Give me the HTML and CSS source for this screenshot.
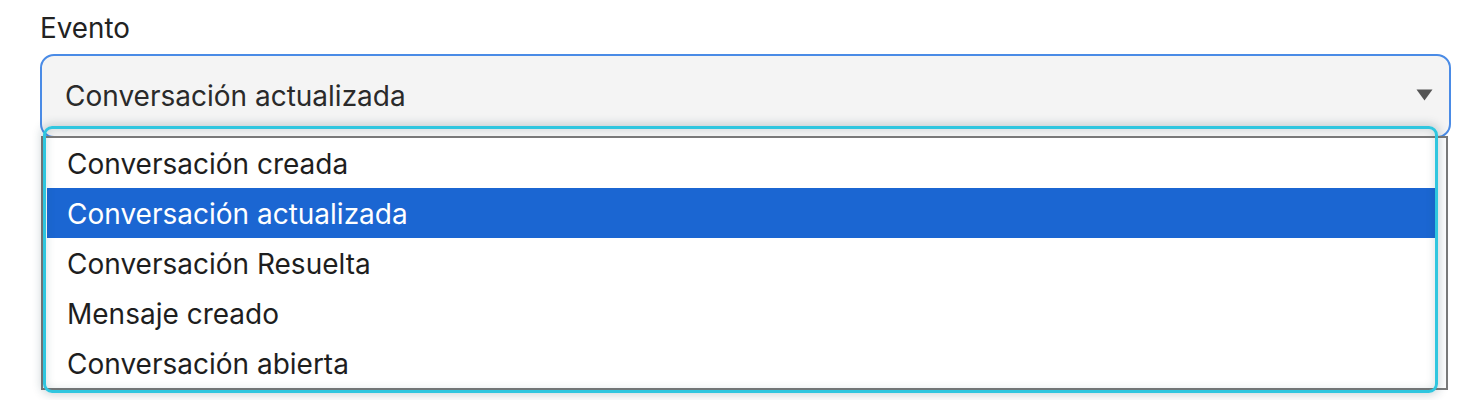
FILE: index.html
```html
<!DOCTYPE html>
<html lang="es">
<head>
<meta charset="utf-8">
<title>Evento</title>
<link rel="stylesheet" href="styles.css">
</head>
<body>
<div class="field">
  <label class="label">Evento</label>
  <div class="select-wrap">
    <div class="select">
      <span class="value">Conversación actualizada</span>
      <svg class="caret" width="17" height="12" viewBox="0 0 17 12"><path d="M0.5 0.5h16L8.5 11.5z" fill="#555"/></svg>
    </div>
    <ul class="list">
      <li class="opt">Conversación creada</li>
      <li class="opt selected">Conversación actualizada</li>
      <li class="opt">Conversación Resuelta</li>
      <li class="opt">Mensaje creado</li>
      <li class="opt">Conversación abierta</li>
    </ul>
    <div class="focus-ring"></div>
  </div>
</div>
</body>
</html>
```
FILE: styles.css
```css
html, body {
  margin: 0;
  padding: 0;
  background: #fff;
}
body {
  font-family: Inter, "Noto Sans", sans-serif;
  color: #222;
  height: 400px;
  overflow: hidden;
}
.field {
  padding: 11px 29px 0 40px;
}
.label {
  display: block;
  font-size: 27.8px;
  line-height: 34px;
  color: #222;
  margin-bottom: 9px;
}
.select-wrap {
  position: relative;
}
.select {
  box-sizing: border-box;
  height: 84px;
  border: 2px solid #4a8be6;
  border-radius: 14px;
  background: #f4f4f4;
  display: flex;
  align-items: flex-start;
  justify-content: space-between;
  padding: 20px 16px 0 23px;
}
.value {
  font-size: 28px;
  line-height: 40px;
  color: #2a2a2a;
}
.caret {
  margin-top: 13px;
}
.list {
  position: absolute;
  left: 1px;
  top: 82px;
  width: 1407px;
  margin: 0;
  padding: 0;
  list-style: none;
  background: #fff;
  border: 2px solid #7a7a7a;
  box-sizing: border-box;
  padding: 0 0 0 4px;
  height: 254px;
}
.opt {
  height: 50px;
  line-height: 52px;
  font-size: 28px;
  padding-left: 20px;
  color: #1e1e1e;
  width: 1388px;
  box-sizing: border-box;
}
.opt.selected {
  background: #1b66d2;
  color: #fff;
}
.focus-ring {
  position: absolute;
  left: 3px;
  top: 72px;
  width: 1395px;
  height: 267px;
  box-sizing: border-box;
  border: 3px solid #2fc6df;
  border-radius: 9px;
  box-shadow: 0 0 10px 2px rgba(30, 70, 80, 0.22), inset 0 0 10px rgba(30, 70, 80, 0.18);
  pointer-events: none;
}
```
